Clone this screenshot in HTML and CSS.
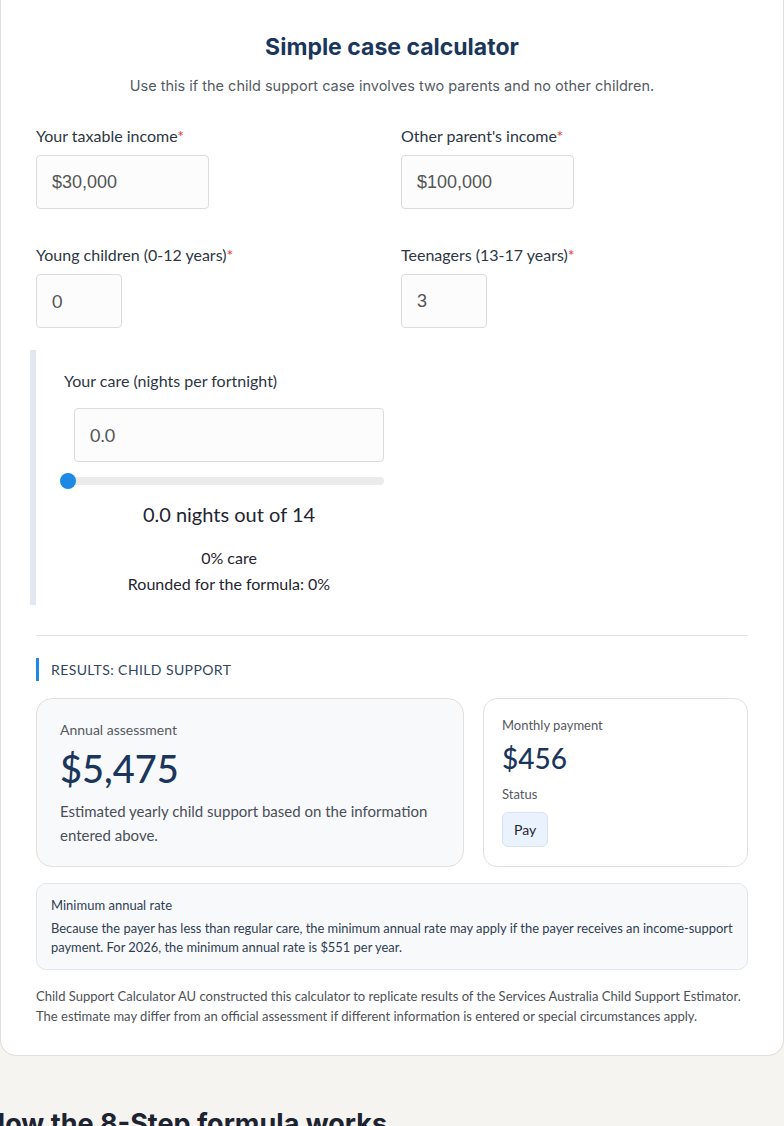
FILE: index.html
```html
<!DOCTYPE html>
<html lang="en">
<head>
  <meta charset="UTF-8">
  <meta name="viewport" content="width=device-width, initial-scale=1.0">
  <title>Simple case calculator</title>
  <link rel="stylesheet" href="styles.css">
</head>
<body>

<div class="calculator">
  <h2 class="calc-title">Simple case calculator</h2>
  <p class="calc-intro">Use this if the child support case involves two parents and no other children.</p>

  <!-- Incomes and children -->
  <div class="field-grid">
    <div class="field">
      <label for="incomeA">Your taxable income<span class="req">*</span></label>
      <input type="text" id="incomeA" class="money" value="$30,000">
    </div>
    <div class="field">
      <label for="incomeB">Other parent's income<span class="req">*</span></label>
      <input type="text" id="incomeB" class="money" value="$100,000">
    </div>
    <div class="field">
      <label for="young">Young children (0-12 years)<span class="req">*</span></label>
      <input type="text" id="young" class="count" value="0">
    </div>
    <div class="field">
      <label for="teens">Teenagers (13-17 years)<span class="req">*</span></label>
      <input type="text" id="teens" class="count teen" value="3">
    </div>
  </div>

  <!-- Care nights -->
  <div class="care">
    <label for="careNights">Your care (nights per fortnight)</label>
    <div class="care-body">
      <input type="text" id="careNights" class="care-input" value="0.0">
      <input type="range" class="care-range" min="0" max="14" step="0.5" value="0">
      <div class="care-nights">0.0 nights out of 14</div>
      <div class="care-note">0% care</div>
      <div class="care-note">Rounded for the formula: 0%</div>
    </div>
  </div>

  <hr class="divider">

  <!-- Results -->
  <h3 class="results-title">RESULTS: CHILD SUPPORT</h3>

  <div class="results">
    <div class="result-main">
      <div class="result-label">Annual assessment</div>
      <div class="result-big">$5,475</div>
      <p class="result-desc">Estimated yearly child support based on the information entered above.</p>
    </div>
    <div class="result-side">
      <div class="side-label">Monthly payment</div>
      <div class="side-value">$456</div>
      <div class="side-label status">Status</div>
      <span class="badge">Pay</span>
    </div>
  </div>

  <div class="notice">
    <div class="notice-title">Minimum annual rate</div>
    <p>Because the payer has less than regular care, the minimum annual rate may apply if the payer receives an income-support payment. For 2026, the minimum annual rate is $551 per year.</p>
  </div>

  <p class="disclaimer">Child Support Calculator AU constructed this calculator to replicate results of the Services Australia Child Support Estimator. The estimate may differ from an official assessment if different information is entered or special circumstances apply.</p>
</div>

<h2 class="section-title">How the 8-Step formula works</h2>

</body>
</html>
```

FILE: styles.css
```css
* {
    margin: 0;
    padding: 0;
    box-sizing: border-box;
}

body {
    font-family: 'Lato', sans-serif;
    background-color: #f5f4f1;
    color: #2d3644;
}

/* Calculator card */
.calculator {
    width: 784px;
    background-color: #ffffff;
    border: 1px solid #e4dfd8;
    border-top: none;
    border-radius: 0 0 16px 16px;
    padding: 33px 35px 29px;
}

.calc-title {
    font-family: 'Inter', sans-serif;
    font-size: 23px;
    line-height: 28px;
    font-weight: 700;
    color: #1b365d;
    text-align: center;
}

.calc-intro {
    font-family: 'Inter', sans-serif;
    font-size: 14.5px;
    line-height: 20px;
    color: #555b63;
    text-align: center;
    margin-top: 15px;
}

.field-grid {
    display: grid;
    grid-template-columns: 347px 1fr;
    column-gap: 18px;
    row-gap: 36px;
    margin-top: 30px;
}

.field label,
.care label {
    display: block;
    font-size: 16px;
    line-height: 20px;
    color: #2d3644;
}

.req {
    color: #e53935;
}

input[type="text"] {
    display: block;
    height: 54px;
    margin-top: 9px;
    padding: 0 15px;
    border: 1px solid #dcdcdc;
    border-radius: 4px;
    background-color: #fcfcfc;
    color: #555555;
    font-size: 18px;
}

.money {
    width: 173px;
    font-family: 'Liberation Sans', Arial, sans-serif;
}

.count {
    width: 86px;
    font-family: 'Lato', sans-serif;
}

.teen {
    font-family: 'Liberation Sans', Arial, sans-serif;
}

/* Care block */
.care {
    margin: 22px 0 0 -6px;
    border-left: 6px solid #e3e7ef;
    padding: 21px 0 8px 28px;
}

.care-body {
    width: 320px;
    padding-left: 10px;
}

input.care-input {
    width: 310px;
    margin-top: 17px;
    font-family: 'Lato', sans-serif;
}

.care-range {
    -webkit-appearance: none;
    appearance: none;
    display: block;
    width: 324px;
    height: 16px;
    margin: 11px 0 0 -14px;
    background: transparent;
}

.care-range::-webkit-slider-runnable-track {
    height: 8px;
    border-radius: 4px;
    background-color: #ebebeb;
}

.care-range::-webkit-slider-thumb {
    -webkit-appearance: none;
    width: 16px;
    height: 16px;
    margin-top: -4px;
    border-radius: 50%;
    background-color: #1e88e5;
}

.care-nights {
    width: 310px;
    margin-top: 12px;
    font-size: 20px;
    line-height: 26px;
    text-align: center;
    color: #1f2530;
}

.care-note {
    width: 310px;
    font-size: 16px;
    line-height: 26px;
    text-align: center;
    color: #1f2530;
}

.care-nights + .care-note {
    margin-top: 18px;
}

.divider {
    border: none;
    border-top: 1px solid #e8e3dc;
    margin-top: 30px;
}

/* Results */
.results-title {
    margin-top: 22px;
    border-left: 3px solid #1e88e5;
    padding-left: 12px;
    font-size: 14px;
    line-height: 23px;
    font-weight: 400;
    letter-spacing: 0.4px;
    color: #2f4560;
}

.results {
    display: grid;
    grid-template-columns: 428px 1fr;
    gap: 19px;
    margin-top: 17px;
}

.result-main {
    background-color: #f8f9fb;
    border: 1px solid #e4dfd8;
    border-radius: 16px;
    padding: 21px 23px 19px;
}

.result-label {
    font-size: 14px;
    line-height: 20px;
    color: #55595f;
}

.result-big {
    margin-top: 6px;
    font-size: 38px;
    line-height: 44px;
    font-weight: 500;
    color: #1b365d;
}

.result-desc {
    margin-top: 9px;
    font-size: 15px;
    line-height: 24px;
    color: #4a4f57;
}

.result-side {
    background-color: #ffffff;
    border: 1px solid #e4dfd8;
    border-radius: 14px;
    padding: 17px 18px 16px;
}

.side-label {
    font-size: 13px;
    line-height: 18px;
    color: #55595f;
}

.side-value {
    margin-top: 7px;
    font-size: 28px;
    line-height: 34px;
    font-weight: 500;
    color: #1b365d;
}

.status {
    margin-top: 10px;
}

.badge {
    display: inline-block;
    margin-top: 9px;
    padding: 8px 11px;
    border: 1px solid #d8e3f2;
    border-radius: 6px;
    background-color: #eaf2fd;
    font-size: 14px;
    line-height: 17px;
    color: #1f2530;
}

.notice {
    margin-top: 16px;
    background-color: #f8f9fb;
    border: 1px solid #dfe6ef;
    border-radius: 10px;
    padding: 13px 14px 12px;
    color: #2f3e52;
}

.notice-title {
    font-size: 13px;
    line-height: 16px;
}

.notice p {
    margin-top: 6px;
    font-size: 12.9px;
    line-height: 19px;
}

.disclaimer {
    margin-top: 16px;
    font-size: 13px;
    line-height: 20px;
    color: #4d5157;
}

.section-title {
    font-family: 'Inter', sans-serif;
    font-size: 27px;
    font-weight: 700;
    line-height: 34px;
    color: #1d2330;
    margin: 51px 0 0 -15px;
}
```
